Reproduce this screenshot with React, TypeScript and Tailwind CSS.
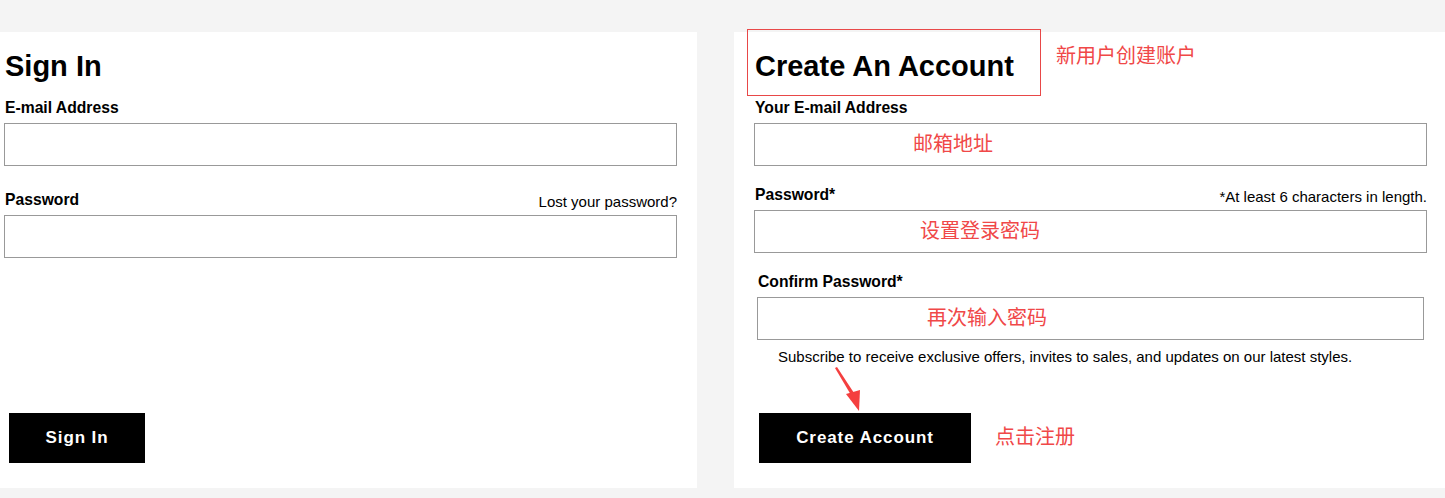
import React from "react";

const sans = "font-['Liberation_Sans','Helvetica_Neue',Arial,sans-serif]";
const cjk = "font-['Noto_Sans_CJK_SC','Noto_Sans',sans-serif]";
const note = `${cjk} text-[20px] leading-[28px] text-[#f04848]`;
const label = "text-[15.7px] leading-[18px] font-bold text-black";

// 输入框（带红色注释文字）
function Field({ text, indent, className = "" }: { text?: string; indent?: string; className?: string }) {
  return (
    <div className={`h-[43px] border border-[#999999] bg-white flex items-center pb-[4px] ${className}`}>
      {text && <span className={`${note} ${indent}`}>{text}</span>}
    </div>
  );
}

function SignIn() {
  return (
    <div className="w-[697px] shrink-0 bg-white pl-[4px] pt-[17px] pb-[25px] flex flex-col items-start">
      <h1 className="pl-[1px] text-[29px] leading-[34px] font-bold text-black">Sign In</h1>
      <div className="mt-[16px] w-[673px] flex flex-col gap-[6px]">
        <label className={`pl-[1px] ${label}`}>E-mail Address</label>
        <Field />
      </div>
      <div className="mt-[25px] w-[673px] flex flex-col gap-[6px]">
        <div className="flex items-end justify-between pl-[1px]">
          <span className={label}>Password</span>
          <span className="text-[15px] leading-[14px] text-black">Lost your password?</span>
        </div>
        <Field />
      </div>
      <button className="mt-[155px] ml-[5px] w-[136px] h-[50px] bg-black text-white text-[17px] tracking-[0.9px] font-bold">
        Sign In
      </button>
    </div>
  );
}

function CreateAccount() {
  return (
    <div className="relative flex-1 bg-white pl-[20px] pt-[17px] pb-[25px] flex flex-col items-start">
      {/* 标注框 */}
      <div className="absolute left-[13px] top-[-3px] w-[294px] h-[67px] border border-[#e84848]" />
      <span className={`${note} absolute left-[322px] top-[9px]`}>新用户创建账户</span>
      <svg className="absolute left-[100px] top-[334px]" width="32" height="48" viewBox="0 0 32 48">
        <polygon points="1,2 3,1 20,27 17,29" fill="#f43f3f" />
        <polygon points="12,28 26,24 25,45" fill="#f43f3f" />
      </svg>

      <h1 className="pl-[1px] text-[29px] leading-[34px] font-bold text-black">Create An Account</h1>
      <div className="mt-[16px] w-[673px] flex flex-col gap-[6px]">
        <label className={`pl-[1px] ${label}`}>Your E-mail Address</label>
        <Field text="邮箱地址" indent="ml-[158px]" />
      </div>
      <div className="mt-[20px] w-[673px] flex flex-col gap-[6px]">
        <div className="flex items-end justify-between pl-[1px]">
          <span className={label}>Password*</span>
          <span className="text-[15px] leading-[14px] text-black">*At least 6 characters in length.</span>
        </div>
        <Field text="设置登录密码" indent="ml-[165px]" />
      </div>
      <div className="mt-[20px] ml-[3px] w-[667px] flex flex-col gap-[6px]">
        <label className={`pl-[1px] ${label}`}>Confirm Password*</label>
        <Field text="再次输入密码" indent="ml-[169px]" />
      </div>
      <p className="mt-[8px] pl-[24px] text-[15px] leading-[17px] text-black">
        Subscribe to receive exclusive offers, invites to sales, and updates on our latest styles.
      </p>
      <div className="mt-[48px] ml-[5px] flex items-center gap-[24px]">
        <button className="w-[212px] h-[50px] bg-black text-white text-[17px] tracking-[0.9px] font-bold">Create Account</button>
        <span className={`${note} pb-[4px]`}>点击注册</span>
      </div>
    </div>
  );
}

export default function App() {
  return (
    <div className={`${sans} w-[1445px] h-[498px] bg-[#f4f4f4] pt-[32px] flex gap-[37px] items-start overflow-hidden`}>
      <SignIn />
      <CreateAccount />
    </div>
  );
}
